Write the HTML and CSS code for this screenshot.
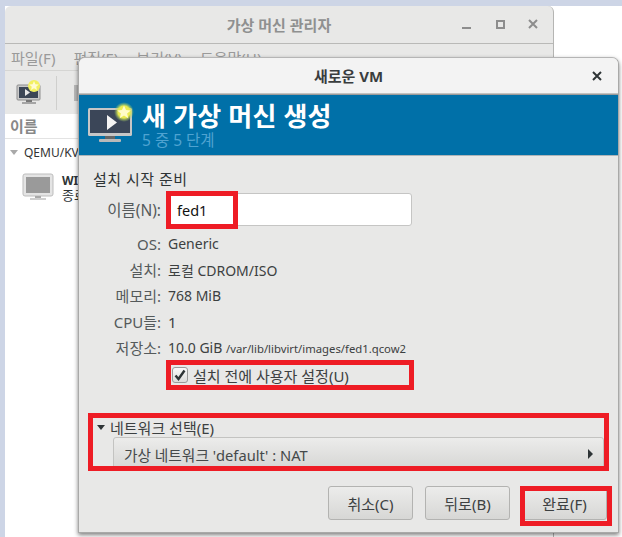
FILE: index.html
```html
<!DOCTYPE html>
<html lang="ko">
<head>
<meta charset="utf-8">
<title>새로운 VM</title>
<link rel="stylesheet" href="styles.css">
</head>
<body>
<div class="desktop">
  <section class="main-window">
    <header class="main-title">
      <span class="main-title-text">가상 머신 관리자</span>
      <div class="win-controls">
        <span class="wc-min"></span>
        <span class="wc-max"></span>
        <svg class="wc-close" width="10" height="10" viewBox="0 0 10 10"><path d="M1 1l8 8M9 1l-8 8" stroke="#8d8d8d" stroke-width="2"/></svg>
      </div>
    </header>
    <nav class="menubar">
      <span>파일(F)</span><span>편집(E)</span><span>보기(V)</span><span>도움말(H)</span>
    </nav>
    <div class="toolbar">
      <svg class="tool-icon" width="26" height="26" viewBox="0 0 26 26">
        <rect x="1" y="5" width="23" height="15" rx="1" fill="#c9c9c9" stroke="#8f8f8f"/>
        <rect x="3" y="7" width="19" height="11" fill="#3c4656"/>
        <path d="M9 9v7l5-3.500z" fill="#e8e8e8"/>
        <rect x="10" y="20" width="6" height="2" fill="#777"/>
        <rect x="6" y="22" width="14" height="2" fill="#a5a5a5"/>
        <circle cx="18" cy="6" r="6" fill="#f2f060"/>
        <path d="M18 1l1.400 3.200 3.400.3-2.600 2.200.8 3.300-3-1.800-3 1.800.8-3.300-2.600-2.200 3.400-.3z" fill="#fffbd0"/>
      </svg>
      <span class="tool-sep"></span>
      <span class="tool-stub"></span>
    </div>
    <div class="list">
      <div class="list-head">이름</div>
      <div class="list-group"><span class="group-arrow"></span>QEMU/KVM</div>
      <div class="list-item">
        <svg width="32" height="28" viewBox="0 0 32 28">
          <rect x="1" y="1" width="30" height="22" rx="2" fill="#e4e4e4" stroke="#bdbdbd"/>
          <rect x="4" y="4" width="24" height="16" fill="#9a9a9a"/>
          <rect x="13" y="23" width="6" height="2" fill="#aaa"/>
          <rect x="8" y="25" width="16" height="2" fill="#cfcfcf"/>
        </svg>
        <div class="item-text"><strong>WIN10</strong><span>종료됨</span></div>
      </div>
    </div>
  </section>

  <section class="dialog">
    <header class="dlg-title">
      <span>새로운 VM</span>
      <svg class="dlg-close" width="10" height="10" viewBox="0 0 10 10"><path d="M1 1l8 8M9 1l-8 8" stroke="#2e3436" stroke-width="2"/></svg>
    </header>
    <div class="banner">
      <svg class="banner-icon" width="46" height="46" viewBox="0 0 46 46">
        <defs>
          <radialGradient id="glow">
            <stop offset="0" stop-color="#f6f25a"/>
            <stop offset=".6" stop-color="#e8ea4e"/>
            <stop offset="1" stop-color="#8fc46e" stop-opacity="0"/>
          </radialGradient>
        </defs>
        <rect x="0" y="9" width="44" height="28" rx="1.500" fill="#c6c6c6"/>
        <rect x="2" y="11" width="40" height="23" fill="#3b4658"/>
        <path d="M19 16v15l10-7.500z" fill="#f4f4f4"/>
        <rect x="17" y="37" width="10" height="3" fill="#666"/>
        <rect x="11" y="40" width="22" height="3" rx="1" fill="#b9b9b9"/>
        <circle cx="36" cy="13" r="10" fill="url(#glow)"/>
        <path d="M36 6.500l2 4.500 4.800.4-3.700 3.100 1.200 4.700-4.300-2.600-4.300 2.600 1.200-4.700-3.700-3.100 4.800-.4z" fill="#fffcc8"/>
      </svg>
      <div class="banner-text">
        <h1>새 가상 머신 생성</h1>
        <p>5 중 5 단계</p>
      </div>
    </div>
    <div class="dlg-body">
      <div class="section-title">설치 시작 준비</div>
      <div class="form">
        <label class="form-label">이름(N):</label>
        <div class="name-input">fed1</div>
        <span class="form-label">OS:</span><span class="form-value">Generic</span>
        <span class="form-label">설치:</span><span class="form-value">로컬 CDROM/ISO</span>
        <span class="form-label">메모리:</span><span class="form-value">768 MiB</span>
        <span class="form-label">CPU들:</span><span class="form-value cpu">1</span>
        <span class="form-label">저장소:</span><span class="form-value">10.0 GiB <small>/var/lib/libvirt/images/fed1.qcow2</small></span>
      </div>
      <div class="check-row">
        <span class="checkbox">
          <svg width="12" height="12" viewBox="0 0 12 12"><path d="M1.500 6.500l3 3.500 6-8.500" fill="none" stroke="#2e3436" stroke-width="2.400"/></svg>
        </span>
        <span>설치 전에 사용자 설정(U)</span>
      </div>
      <div class="expander">
        <div class="expander-head"><span class="exp-arrow"></span>네트워크 선택(E)</div>
        <div class="combo"><span>가상 네트워크 'default' : NAT</span><span class="combo-arrow"></span></div>
      </div>
      <div class="actions">
        <button class="btn">취소(C)</button>
        <button class="btn">뒤로(B)</button>
        <button class="btn">완료(F)</button>
      </div>
    </div>
  </section>

  <div class="mark mark-name"></div>
  <div class="mark mark-check"></div>
  <div class="mark mark-net"></div>
  <div class="mark mark-done"></div>
</div>
</body>
</html>
```
FILE: styles.css
```css
* { box-sizing: border-box; }
html, body { margin: 0; padding: 0; }
body {
  width: 622px;
  height: 537px;
  overflow: hidden;
  font-family: "Noto Sans", "Noto Sans CJK KR", sans-serif;
  font-size: 13px;
  color: #2e3436;
  background: #fff;
}
.desktop {
  position: relative;
  width: 622px;
  height: 537px;
  overflow: hidden;
  background: linear-gradient(#cdd5e6 0 6px, #fff 6px);
}
.desktop::before {
  content: "";
  position: absolute;
  left: 0;
  top: 6px;
  width: 5px;
  height: 531px;
  background: #cdd5e6;
}

/* main window */
.main-window {
  position: absolute;
  left: 5px;
  top: 6px;
  width: 549px;
  height: 540px;
  display: flex;
  flex-direction: column;
  background: #e8e8e7;
  border-right: 1px solid #b5b5b3;
  border-radius: 6px 6px 0 0;
}
.main-title {
  height: 38px;
  flex: none;
  display: flex;
  align-items: center;
  justify-content: center;
  position: relative;
  border-bottom: 1px solid #b9b9b7;
  font-weight: 700;
  font-size: 15px;
  color: #8f9090;
}
.win-controls {
  position: absolute;
  right: 15px;
  top: 11px;
  width: 76px;
  display: flex;
  align-items: center;
  justify-content: space-between;
  height: 14px;
}
.wc-min { height: 2px; margin-top: 7px; background: #8d8d8d; width: 9px; }
.wc-max { width: 9px; height: 9px; border: 2px solid #8d8d8d; margin-left: 2px; }
.menubar {
  height: 27px;
  flex: none;
  display: flex;
  gap: 18px;
  align-items: center;
  padding: 0 6px;
  font-size: 15px;
  color: #9a9a9a;
  border-bottom: 1px solid #d5d5d3;
}
.toolbar {
  height: 43px;
  flex: none;
  display: flex;
  align-items: center;
  padding: 0 11px;
  gap: 14px;
}
.tool-sep { width: 1px; height: 34px; background: #cfcfcd; }
.tool-stub { width: 8px; height: 16px; margin-left: 3px; background: #b9b9b9; }
.list { flex: 1; background: #fff; }
.list-head {
  height: 25px;
  line-height: 24px;
  padding-left: 5px;
  font-weight: 700;
  font-size: 15px;
  color: #888;
  border-bottom: 1px solid #e3e3e3;
}
.list-group {
  height: 26px;
  display: flex;
  align-items: center;
  gap: 6px;
  padding-left: 5px;
  font-size: 12px;
  color: #333;
}
.group-arrow {
  width: 0;
  height: 0;
  border-style: solid;
  border-width: 5px 4.500px 0;
  border-color: #a9a9a9 transparent transparent;
}
.list-item {
  display: flex;
  gap: 8px;
  padding: 8px 0 0 17px;
}
.item-text { display: flex; flex-direction: column; font-size: 13px; line-height: 15px; }
.item-text strong { font-size: 12px; }

/* dialog */
.dialog {
  position: absolute;
  left: 78px;
  top: 57px;
  width: 541px;
  height: 476px;
  display: flex;
  flex-direction: column;
  background: #e8e8e7;
  border: 1px solid #a9a9a8;
  border-top-color: #b5b5b5;
  border-radius: 7px 7px 0 0;
  box-shadow: 0 2px 4px rgba(0, 0, 0, .5);
}
.dlg-title {
  height: 36px;
  flex: none;
  display: flex;
  align-items: center;
  justify-content: center;
  position: relative;
  background: #f3f3f3;
  border-radius: 6px 6px 0 0;
  border-bottom: 1px solid #c2c2c0;
  font-weight: 700;
  font-size: 15px;
  color: #3a3d3e;
}
.dlg-close { position: absolute; right: 16px; top: 13px; }
.banner {
  height: 62px;
  flex: none;
  display: flex;
  gap: 8px;
  padding: 6px 0 0 9px;
  background: #0070a8;
  border-top: 1px solid #9b9b9b;
  border-bottom: 1px solid #aeb4b8;
}
.banner-icon { flex: none; margin-top: -2px; }
.banner-text { color: #fff; }
.banner-text h1 {
  margin: 0;
  font-size: 26px;
  line-height: 31px;
  font-weight: 700;
  letter-spacing: .2px;
}
.banner-text p {
  margin: 0;
  font-size: 15.500px;
  line-height: 17px;
  color: #4fa3d1;
}
.dlg-body {
  flex: 1;
  display: flex;
  flex-direction: column;
  padding: 14px 11px 0 14px;
  min-height: 0;
}
.section-title { font-size: 15px; line-height: 18px; letter-spacing: .5px; }
.form {
  display: grid;
  grid-template-columns: 68px auto;
  grid-template-rows: 37.500px;
  grid-auto-rows: 26px;
  column-gap: 7px;
  margin-top: 5px;
  align-items: center;
  justify-content: start;
}
.form-label { text-align: right; color: #555a5b; font-size: 15px; white-space: nowrap; }
.form-label:first-child { align-self: start; line-height: 35px; font-size: 15.500px; }
.form-value { font-size: 14px; color: #3c4041; white-space: nowrap; }
.form-value small { font-size: 11.300px; }
.cpu { font-size: 15px; }
.name-input {
  align-self: start;
  width: 244px;
  height: 33px;
  padding-left: 8px;
  line-height: 33px;
  font-size: 14.500px;
  color: #111;
  background: #fff;
  border: 1px solid #c5c5c4;
  border-radius: 3px;
}
.check-row {
  display: flex;
  align-items: center;
  gap: 5px;
  margin: 3.500px 0 0 79px;
  height: 22px;
  font-size: 15px;
  color: #3c4041;
}
.checkbox {
  width: 16px;
  height: 16px;
  display: flex;
  align-items: center;
  justify-content: center;
  background: linear-gradient(#fafafa, #dcdcdb);
  border: 1px solid #9a9a9a;
  border-radius: 3px;
}
.expander { margin: 32px 3px 0 4px; }
.expander-head {
  display: flex;
  align-items: center;
  gap: 5px;
  height: 18px;
  font-size: 15px;
  color: #3c4041;
}
.exp-arrow {
  width: 0;
  height: 0;
  border-style: solid;
  border-width: 5px 4.500px 0;
  border-color: #2e3436 transparent transparent;
}
.combo {
  margin: 1px 0 0 16px;
  height: 34px;
  display: flex;
  align-items: center;
  justify-content: space-between;
  padding: 0 10px 0 10px;
  font-size: 14.700px;
  color: #45494a;
  background: linear-gradient(#ececeb, #d5d5d3);
  border: 1px solid #c3c3c1;
  border-radius: 3px;
}
.combo-arrow {
  width: 0;
  height: 0;
  border-style: solid;
  border-width: 5px 0 5px 5px;
  border-color: transparent transparent transparent #2e3436;
}
.actions {
  margin-top: 15px;
  display: flex;
  justify-content: flex-end;
  gap: 12px;
}
.btn {
  width: 85px;
  height: 34px;
  padding: 0;
  font: inherit;
  font-size: 15px;
  color: #3c4041;
  background: linear-gradient(#ececeb, #d7d7d5);
  border: 1px solid #b3b3b1;
  border-radius: 3px;
}

/* red annotation boxes */
.mark { position: absolute; border: 5px solid #ee1c25; }
.mark-name { left: 166px; top: 191px; width: 72px; height: 38px; }
.mark-check { left: 166px; top: 360px; width: 248px; height: 30px; }
.mark-net { left: 88px; top: 413px; width: 521px; height: 58px; }
.mark-done { left: 520px; top: 486px; width: 92px; height: 40px; }
```
